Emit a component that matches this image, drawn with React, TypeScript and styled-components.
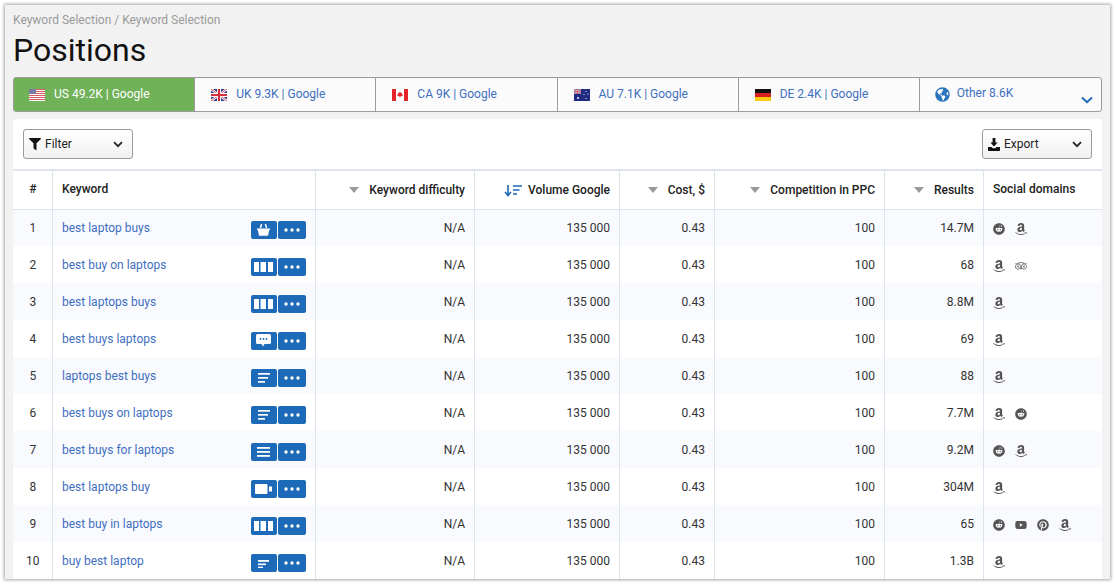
import React from "react";
import styled, { createGlobalStyle } from "styled-components";
import { FaAmazon, FaFilter, FaPinterest, FaReddit, FaTripadvisor, FaYoutube, FaGlobeAmericas } from "react-icons/fa";

const Global = createGlobalStyle`
  html, body { margin: 0; padding: 0; background: #fff; overflow: hidden; }
  body { font-family: Roboto, "Liberation Sans", sans-serif; font-size: 12px; color: #222; }
`;

const Page = styled.div`
  width: 1115px;
  height: 584px;
  padding: 5px;
  box-sizing: border-box;
`;

const Frame = styled.div`
  height: 574px;
  background: #f2f2f2;
  box-shadow: 0 0 3px 1px rgba(0, 0, 0, 0.35);
  padding: 8px 8px 0 8px;
  box-sizing: border-box;
  overflow: hidden;
`;

const Breadcrumb = styled.div`
  font-size: 12px;
  line-height: 15px;
  color: #9a9a9a;
`;

const Title = styled.h1`
  margin: 2px 0 0 0;
  font-size: 32px;
  line-height: 40px;
  font-weight: 400;
  color: #111;
`;

const Tabs = styled.div`
  margin-top: 7px;
  display: grid;
  grid-template-columns: repeat(6, 1fr);
  height: 35px;
  box-sizing: border-box;
  border: 1px solid #9b9b9b;
  border-radius: 3px;
  background: #fbfbfb;
`;

const Tab = styled.div<{ $active?: boolean; $last?: boolean }>`
  display: flex;
  align-items: center;
  padding-left: ${(p) => (p.$last || p.$active ? "15px" : "16px")};
  gap: ${(p) => (p.$last ? "7px" : "9px")};
  position: relative;
  color: ${(p) => (p.$active ? "#fff" : "#3f6fc0")};
  background: ${(p) => (p.$active ? "#70b258" : "transparent")};
  border-right: ${(p) => (p.$last ? "none" : "1px solid #9b9b9b")};
  font-size: 12px;
  line-height: 14px;
  box-sizing: border-box;
`;

const TabLabel = styled.span`
  margin-top: -1px;
`;

const OtherLabel = styled.span`
  margin-top: -3px;
`;

const TabChevron = styled.svg`
  position: absolute;
  right: 8px;
  bottom: 7px;
`;

const Card = styled.div`
  margin-top: 7px;
  background: #fff;
  border-radius: 3px 3px 0 0;
`;

const Toolbar = styled.div`
  height: 50px;
  padding: 0 10px;
  display: flex;
  align-items: center;
  justify-content: space-between;
`;

const DropButton = styled.div`
  width: 110px;
  height: 30px;
  box-sizing: border-box;
  border: 1px solid #9b9b9b;
  border-radius: 3px;
  background: linear-gradient(#fff, #f1f1f1);
  display: flex;
  align-items: center;
  padding: 0 9px 0 5px;
  gap: 4px;
  font-size: 12px;
  color: #222;
`;

const DropLabel = styled.span`
  flex: 1;
`;

const Table = styled.table`
  width: 100%;
  table-layout: fixed;
  border-collapse: collapse;
  border-top: 2px solid #dfe3f0;
`;

const Th = styled.th<{ $align?: string }>`
  height: 39px;
  padding: 0 ${(p) => (p.$align === "left" ? "9px" : "8.5px")} ${(p) => (p.$align ? "2px" : "0")} ${(p) => (p.$align ? "9.5px" : "9px")};
  font-size: 12px;
  font-weight: 500;
  color: #222;
  text-align: ${(p) => p.$align || "right"};
  border-left: 1px solid #dfe3f0;
  border-bottom: 1px solid #dfe3f0;
  box-sizing: border-box;
  white-space: nowrap;
  &:first-child { border-left: none; }
`;

const SortArrow = styled.span`
  display: inline-block;
  width: 0;
  height: 0;
  margin-right: 10px;
  border-left: 5.5px solid transparent;
  border-right: 5.5px solid transparent;
  border-top: 6px solid #9a9a9a;
  vertical-align: 1px;
`;

const SortIcon = styled.svg`
  margin-right: 5px;
  vertical-align: -3px;
`;

const Tr = styled.tr<{ $odd: boolean }>`
  background: ${(p) => (p.$odd ? "#f9fafe" : "#fff")};
`;

const Td = styled.td<{ $align?: string; $kw?: boolean }>`
  height: 37px;
  padding: 0 ${(p) => (p.$kw ? "9px" : "8.5px")} 0 ${(p) => (p.$kw || p.$align === "center" ? "9.5px" : "9px")};
  font-size: 12px;
  color: #333;
  text-align: ${(p) => p.$align || "right"};
  border-left: 1px solid #dfe3f0;
  box-sizing: border-box;
  white-space: nowrap;
  &:first-child { border-left: none; }
`;

const KeywordCell = styled.div`
  display: flex;
  align-items: center;
  justify-content: space-between;
`;

const KeywordLink = styled.a`
  color: #3f6fc0;
  text-decoration: none;
`;

const ActionGroup = styled.div`
  display: flex;
  gap: 1px;
  margin-top: 4px;
`;

const ActionButton = styled.div<{ $w: number }>`
  width: ${(p) => p.$w}px;
  height: 18px;
  background: #1d6ab9;
  border-radius: 2px;
  display: flex;
  align-items: center;
  justify-content: center;
`;

const Social = styled.div`
  display: flex;
  align-items: center;
  gap: 10px;
  color: #555;
  padding-top: 2px;
`;

const AmazonIcon = styled(FaAmazon)`
  width: 12px;
  height: 14px;
  flex: none;
`;

const ShortLines = styled.svg`
  margin-top: 2px;
`;

const Flag = styled.svg`
  flex: none;
  width: 16px;
  height: 12px;
`;

const USFlag = () => (
  <Flag viewBox="0 0 16 12">
    <rect width="16" height="12" fill="#fff" />
    {[0, 2, 4, 6, 8, 10].map((y) => (
      <rect key={y} y={y} width="16" height="1" fill="#d65a62" />
    ))}
    <rect width="7" height="5" fill="#7a7ca6" />
  </Flag>
);

const UKFlag = () => (
  <Flag viewBox="0 0 16 12">
    <rect width="16" height="12" fill="#2b3a8c" />
    <path d="M0 0L16 12M16 0L0 12" stroke="#fff" strokeWidth="2.4" />
    <path d="M0 0L16 12M16 0L0 12" stroke="#d22f3c" strokeWidth="0.8" />
    <path d="M8 0V12M0 6H16" stroke="#fff" strokeWidth="4" />
    <path d="M8 0V12M0 6H16" stroke="#d22f3c" strokeWidth="2.2" />
  </Flag>
);

const CAFlag = () => (
  <Flag viewBox="0 0 16 12">
    <rect width="16" height="12" fill="#fff" />
    <rect width="4" height="12" fill="#e5232b" />
    <rect x="12" width="4" height="12" fill="#e5232b" />
    <path d="M8 2.5L8.8 4L10 3.6L9.6 5.6L11 5.4L10.4 7L8.2 7.6V9H7.8V7.6L5.6 7L5 5.4L6.4 5.6L6 3.6L7.2 4Z" fill="#e5232b" />
  </Flag>
);

const AUFlag = () => (
  <Flag viewBox="0 0 16 12">
    <rect width="16" height="12" fill="#1f2a80" />
    <rect width="7" height="5" fill="#4b4f94" />
    <path d="M0 0L7 5M7 0L0 5" stroke="#e9aab0" strokeWidth="1" />
    <path d="M3.5 0V5M0 2.5H7" stroke="#fff" strokeWidth="1.4" />
    <path d="M3.5 0V5M0 2.5H7" stroke="#d22f3c" strokeWidth="0.7" />
    <circle cx="4" cy="9" r="1" fill="#fff" />
    <circle cx="12" cy="2.5" r="0.6" fill="#fff" />
    <circle cx="12" cy="9.5" r="0.6" fill="#fff" />
    <circle cx="10" cy="5.5" r="0.6" fill="#fff" />
    <circle cx="14" cy="5" r="0.6" fill="#fff" />
  </Flag>
);

const DEFlag = () => (
  <Flag viewBox="0 0 16 12">
    <rect width="16" height="4" fill="#111" />
    <rect y="4" width="16" height="4" fill="#d9201e" />
    <rect y="8" width="16" height="4" fill="#fccb14" />
  </Flag>
);

const Chevron = () => (
  <svg width="10" height="7" viewBox="0 0 10 7">
    <path d="M1 1.2L5 5.2L9 1.2" fill="none" stroke="#222" strokeWidth="1.7" />
  </svg>
);

const ExportIcon = () => (
  <svg width="12" height="13" viewBox="0 0 12 13">
    <path d="M4.6 0H7.4V4.5H9.6L6 8.4L2.4 4.5H4.6Z" fill="#111" />
    <path d="M0 9H3.4L4.8 10.3H7.2L8.6 9H12V12.2A0.8 0.8 0 0 1 11.2 13H0.8A0.8 0.8 0 0 1 0 12.2Z" fill="#111" />
  </svg>
);

const Dots = () => (
  <svg width="16" height="4" viewBox="0 0 16 4">
    <circle cx="2" cy="2" r="1.7" fill="#fff" />
    <circle cx="8" cy="2" r="1.7" fill="#fff" />
    <circle cx="14" cy="2" r="1.7" fill="#fff" />
  </svg>
);

type Kind = "basket" | "cols" | "chat" | "lines3" | "lines" | "video" | "short";

const KindIcon = ({ kind }: { kind: Kind }) => {
  const w = "#fff";
  switch (kind) {
    case "basket":
      return (
        <svg width="13" height="13" viewBox="0 0 13 13">
          <path d="M0 5.5H13V7H12.2L11 12.8H2L0.8 7H0Z" fill={w} />
          <path d="M3.4 5L4.6 1M9.6 5L8.4 1" stroke={w} strokeWidth="1.5" fill="none" />
        </svg>
      );
    case "cols":
      return (
        <svg width="19" height="10" viewBox="0 0 19 10">
          <rect x="0" width="5" height="10" fill={w} />
          <rect x="6.5" width="5.5" height="10" fill={w} />
          <rect x="14" width="5" height="10" fill={w} />
        </svg>
      );
    case "chat":
      return (
        <svg width="15" height="13" viewBox="0 0 15 13">
          <path d="M1.5 0H13.5A1.5 1.5 0 0 1 15 1.5V8.5A1.5 1.5 0 0 1 13.5 10H8.5L7 12.5L5.5 10H1.5A1.5 1.5 0 0 1 0 8.5V1.5A1.5 1.5 0 0 1 1.5 0Z" fill={w} />
          <circle cx="4.5" cy="5" r="0.9" fill="#1d6ab9" />
          <circle cx="7.5" cy="5" r="0.9" fill="#1d6ab9" />
          <circle cx="10.5" cy="5" r="0.9" fill="#1d6ab9" />
        </svg>
      );
    case "lines3":
      return (
        <svg width="12" height="10" viewBox="0 0 12 10">
          <rect width="12" height="1.7" fill={w} />
          <rect y="4" width="10" height="1.7" fill={w} />
          <rect y="8" width="7" height="1.7" fill={w} />
        </svg>
      );
    case "lines":
      return (
        <svg width="13" height="10" viewBox="0 0 13 10">
          <rect width="13" height="1.8" fill={w} />
          <rect y="4" width="13" height="1.8" fill={w} />
          <rect y="8" width="13" height="1.8" fill={w} />
        </svg>
      );
    case "video":
      return (
        <svg width="17" height="10" viewBox="0 0 17 10">
          <rect width="12.5" height="10" rx="1" fill={w} />
          <rect x="14" y="2.5" width="3" height="5" fill={w} />
        </svg>
      );
    case "short":
      return (
        <ShortLines width="11" height="8" viewBox="0 0 11 8">
          <rect x="0" y="0" width="11" height="1.8" fill={w} />
          <rect x="0" y="3.5" width="8" height="1.6" fill={w} />
          <rect x="0" y="6.6" width="5" height="1.4" fill={w} />
        </ShortLines>
      );
  }
};

type Site = "reddit" | "amazon" | "trip" | "youtube" | "pinterest";

const SiteIcon = ({ site }: { site: Site }) => {
  switch (site) {
    case "reddit":
      return <FaReddit size={12} />;
    case "amazon":
      return <AmazonIcon />;
    case "trip":
      return <FaTripadvisor size={12} color="#888" />;
    case "youtube":
      return <FaYoutube size={12} />;
    case "pinterest":
      return <FaPinterest size={12} />;
  }
};

const rows: { kw: string; kind: Kind; results: string; sites: Site[] }[] = [
  { kw: "best laptop buys", kind: "basket", results: "14.7M", sites: ["reddit", "amazon"] },
  { kw: "best buy on laptops", kind: "cols", results: "68", sites: ["amazon", "trip"] },
  { kw: "best laptops buys", kind: "cols", results: "8.8M", sites: ["amazon"] },
  { kw: "best buys laptops", kind: "chat", results: "69", sites: ["amazon"] },
  { kw: "laptops best buys", kind: "lines3", results: "88", sites: ["amazon"] },
  { kw: "best buys on laptops", kind: "lines3", results: "7.7M", sites: ["amazon", "reddit"] },
  { kw: "best buys for laptops", kind: "lines", results: "9.2M", sites: ["reddit", "amazon"] },
  { kw: "best laptops buy", kind: "video", results: "304M", sites: ["amazon"] },
  { kw: "best buy in laptops", kind: "cols", results: "65", sites: ["reddit", "youtube", "pinterest", "amazon"] },
  { kw: "buy best laptop", kind: "short", results: "1.3B", sites: ["amazon"] },
];

const tabs = [
  { label: "US 49.2K | Google", flag: <USFlag /> },
  { label: "UK 9.3K | Google", flag: <UKFlag /> },
  { label: "CA 9K | Google", flag: <CAFlag /> },
  { label: "AU 7.1K | Google", flag: <AUFlag /> },
  { label: "DE 2.4K | Google", flag: <DEFlag /> },
];

const cols = [39, 263, 159, 145, 95, 170, 99, 119];

export default function App() {
  return (
    <Page>
      <Global />
      <Frame>
        <Breadcrumb>Keyword Selection / Keyword Selection</Breadcrumb>
        <Title>Positions</Title>
        <Tabs>
          {tabs.map((t, i) => (
            <Tab key={t.label} $active={i === 0}>
              {t.flag}
              <TabLabel>{t.label}</TabLabel>
            </Tab>
          ))}
          <Tab $last>
            <FaGlobeAmericas size={15} color="#2a75bd" />
            <OtherLabel>Other 8.6K</OtherLabel>
            <TabChevron width="12" height="8" viewBox="0 0 12 8">
              <path d="M1 1.5L6 6.2L11 1.5" fill="none" stroke="#1d6ab9" strokeWidth="2" />
            </TabChevron>
          </Tab>
        </Tabs>
        <Card>
          <Toolbar>
            <DropButton>
              <FaFilter size={12} color="#111" />
              <DropLabel>Filter</DropLabel>
              <Chevron />
            </DropButton>
            <DropButton>
              <ExportIcon />
              <DropLabel>Export</DropLabel>
              <Chevron />
            </DropButton>
          </Toolbar>
          <Table>
            <colgroup>
              {cols.map((w, i) => (
                <col key={i} style={{ width: w }} />
              ))}
            </colgroup>
            <thead>
              <tr>
                <Th $align="center">#</Th>
                <Th $align="left">Keyword</Th>
                <Th><SortArrow />Keyword difficulty</Th>
                <Th>
                  <SortIcon width="19" height="12" viewBox="0 0 19 12">
                    <path d="M4 0V10M1 7L4 10.5L7 7" fill="none" stroke="#1d6ab9" strokeWidth="1.6" />
                    <path d="M9 1H18M9 5H15.5M9 9H13" stroke="#1d6ab9" strokeWidth="1.6" />
                  </SortIcon>
                  Volume Google
                </Th>
                <Th><SortArrow />Cost, $</Th>
                <Th><SortArrow />Competition in PPC</Th>
                <Th><SortArrow />Results</Th>
                <Th $align="left">Social domains</Th>
              </tr>
            </thead>
            <tbody>
              {rows.map((r, i) => (
                <Tr key={r.kw} $odd={i % 2 === 0}>
                  <Td $align="center">{i + 1}</Td>
                  <Td $align="left" $kw>
                    <KeywordCell>
                      <KeywordLink>{r.kw}</KeywordLink>
                      <ActionGroup>
                        <ActionButton $w={26}><KindIcon kind={r.kind} /></ActionButton>
                        <ActionButton $w={28}><Dots /></ActionButton>
                      </ActionGroup>
                    </KeywordCell>
                  </Td>
                  <Td>N/A</Td>
                  <Td>135 000</Td>
                  <Td>0.43</Td>
                  <Td>100</Td>
                  <Td>{r.results}</Td>
                  <Td $align="left">
                    <Social>
                      {r.sites.map((s, j) => (
                        <SiteIcon key={j} site={s} />
                      ))}
                    </Social>
                  </Td>
                </Tr>
              ))}
            </tbody>
          </Table>
        </Card>
      </Frame>
    </Page>
  );
}
